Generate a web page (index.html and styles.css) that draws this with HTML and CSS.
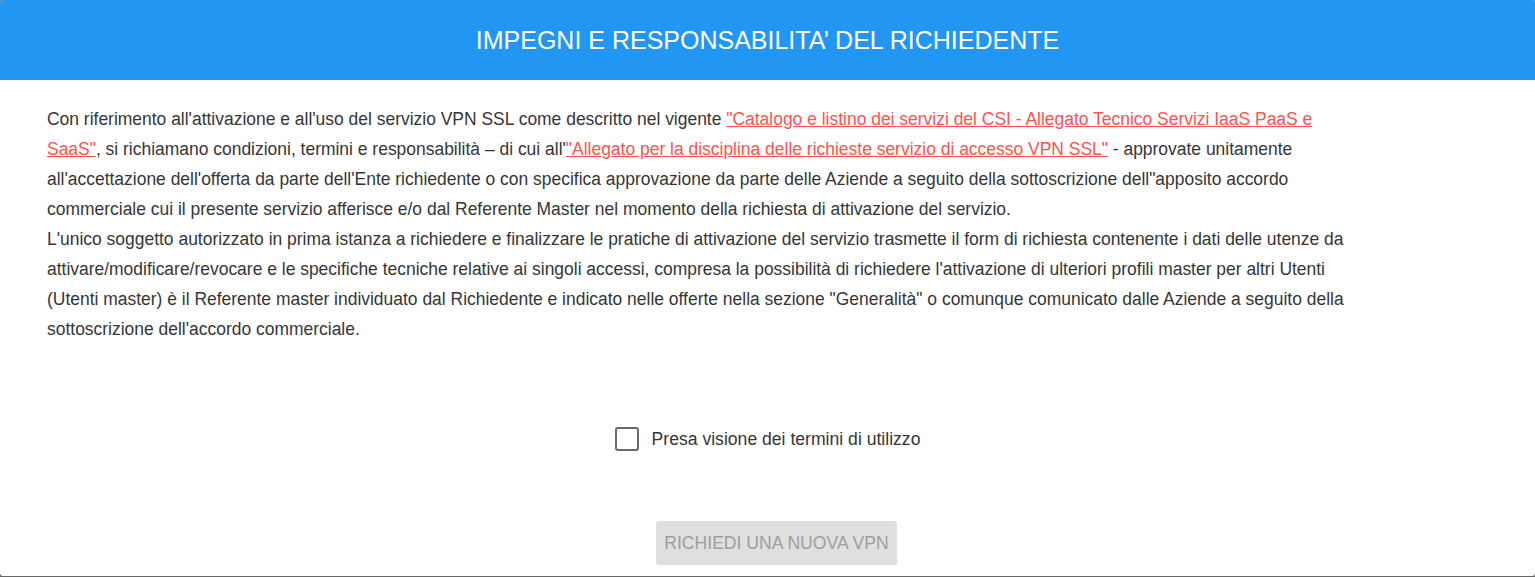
FILE: index.html
```html
<!DOCTYPE html>
<html lang="it">
<head>
<meta charset="utf-8">
<title>Impegni e responsabilità del richiedente</title>
<link rel="stylesheet" href="styles.css">
</head>
<body>
<div class="dialog">
  <header class="dialog-header">
    <h1 class="dialog-title">IMPEGNI E RESPONSABILITA’ DEL RICHIEDENTE</h1>
  </header>
  <div class="dialog-body">
    <p class="terms">Con riferimento all'attivazione e all'uso del servizio VPN SSL come descritto nel vigente <a class="terms-link" href="#">"Catalogo e listino dei servizi del CSI - Allegato Tecnico Servizi IaaS PaaS e SaaS"</a>, si richiamano condizioni, termini e responsabilità – di cui all'<a class="terms-link" href="#">"Allegato per la disciplina delle richieste servizio di accesso VPN SSL"</a> - approvate unitamente all'accettazione dell'offerta da parte dell'Ente richiedente o con specifica approvazione da parte delle Aziende a seguito della sottoscrizione dell"apposito accordo commerciale cui il presente servizio afferisce e/o dal Referente Master nel momento della richiesta di attivazione del servizio.<br>L'unico soggetto autorizzato in prima istanza a richiedere e finalizzare le pratiche di attivazione del servizio trasmette il form di richiesta contenente i dati delle utenze da attivare/modificare/revocare e le specifiche tecniche relative ai singoli accessi, compresa la possibilità di richiedere l'attivazione di ulteriori profili master per altri Utenti (Utenti master) è il Referente master individuato dal Richiedente e indicato nelle offerte nella sezione "Generalità" o comunque comunicato dalle Aziende a seguito della sottoscrizione dell'accordo commerciale.</p>
    <label class="accept-row">
      <span class="checkbox"></span>
      <span class="accept-label">Presa visione dei termini di utilizzo</span>
    </label>
    <div class="actions">
      <button class="btn-request" type="button" disabled>RICHIEDI UNA NUOVA VPN</button>
    </div>
  </div>
</div>
</body>
</html>
```
FILE: styles.css
```css
html, body {
  margin: 0;
  padding: 0;
}
body {
  background: #666666;
  font-family: "Liberation Sans", Arial, sans-serif;
  height: 577px;
  overflow: hidden;
}
.dialog {
  height: 576px;
  background: #ffffff;
  border-radius: 3px;
  overflow: hidden;
}
.dialog-header {
  height: 80px;
  background: #2196f3;
  display: flex;
  align-items: center;
  justify-content: center;
}
.dialog-title {
  margin: 0;
  color: #ffffff;
  font-size: 25px;
  font-weight: normal;
}
.dialog-body {
  padding: 24px 47px 0 47px;
}
.terms {
  margin: 0;
  max-width: 1308px;
  font-size: 17.47px;
  line-height: 30px;
  color: #363636;
}
.terms-link {
  color: #ff5252;
  text-decoration: underline;
}
.accept-row {
  margin-top: 80px;
  height: 30px;
  display: flex;
  align-items: center;
  justify-content: center;
  gap: 13px;
  cursor: pointer;
}
.checkbox {
  width: 20px;
  height: 20px;
  border: 2px solid #6b6b6b;
  border-radius: 3px;
  box-sizing: content-box;
}
.accept-label {
  font-size: 17.6px;
  color: #363636;
}
.actions {
  margin-top: 67px;
  display: flex;
  justify-content: center;
  padding-left: 18px;
}
.btn-request {
  width: 241px;
  height: 44px;
  border: none;
  border-radius: 3px;
  background: #dfdfdf;
  color: #9e9e9e;
  font-family: "Liberation Sans", Arial, sans-serif;
  font-size: 17.6px;
  padding: 0;
}
```
